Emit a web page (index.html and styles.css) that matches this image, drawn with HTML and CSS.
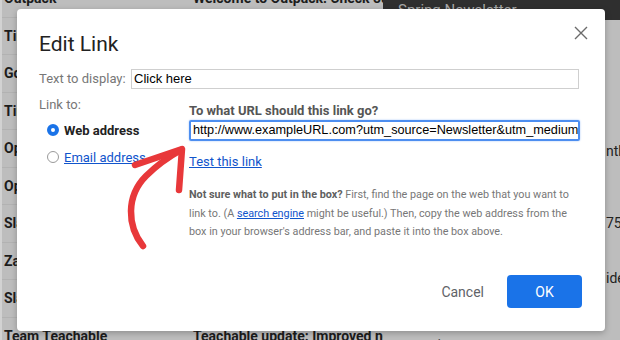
FILE: index.html
```html
<!DOCTYPE html>
<html>
<head>
<meta charset="utf-8">
<link rel="stylesheet" href="styles.css">
</head>
<body>
<div class="screen">
  <div class="inbox">
    <div class="row"><span class="from">Outpack</span><span class="subj">Welcome to Outpack! Check out</span></div>
    <div class="row"><span class="from">Tim Ferriss</span><span class="subj">5-Bullet Friday</span></div>
    <div class="row"><span class="from">Google</span><span class="subj">Security alert</span></div>
    <div class="row"><span class="from">Tiny Letter</span><span class="subj">Your weekly digest</span></div>
    <div class="row"><span class="from">OptinMonster</span><span class="subj">New feature</span></div>
    <div class="row"><span class="from">OptinMonster</span><span class="subj">Webinar reminder</span></div>
    <div class="row"><span class="from">Slack</span><span class="subj">New sign-in</span></div>
    <div class="row"><span class="from">Zapier</span><span class="subj">Your Zap ran</span></div>
    <div class="row"><span class="from">Slack</span><span class="subj">Weekly summary</span></div>
    <div class="row"><span class="from">Team Teachable</span><span class="subj">Teachable update: Improved no</span></div>
  </div>
  <div class="compose">
    <div class="compose-head">Spring Newsletter</div>
    <div class="compose-body">
      <div class="snip s1">nth's</div>
      <div class="snip s2">75</div>
      <div class="snip s3">ide</div>
      <div class="sign">Hannah</div>
    </div>
  </div>
</div>

<div class="dialog">
  <h1 class="title">Edit Link</h1>
  <svg class="close" width="14" height="14" viewBox="0 0 14 14"><path d="M1 1L13 13M13 1L1 13" stroke="#6b6b6b" stroke-width="1.4" fill="none"/></svg>

  <div class="display-row">
    <span class="label">Text to display:</span>
    <div class="field">Click here</div>
  </div>

  <div class="link-grid">
    <div class="link-left">
      <div class="label">Link to:</div>
      <div class="radio-row first"><span class="radio on"></span><span class="radio-text">Web address</span></div>
      <div class="radio-row second"><span class="radio"></span><a class="link">Email address</a></div>
    </div>
    <div class="link-right">
      <div class="question">To what URL should this link go?</div>
      <div class="url-field">http://www.exampleURL.com?utm_source=Newsletter&amp;utm_medium=email</div>
      <a class="link test">Test this link</a>
      <p class="help"><b>Not sure what to put in the box?</b> First, find the page on the web that you want to<br>link to. (A <a class="link">search engine</a> might be useful.) Then, copy the web address from the<br>box in your browser's address bar, and paste it into the box above.</p>
    </div>
  </div>

  <div class="footer">
    <button class="cancel">Cancel</button>
    <button class="ok">OK</button>
  </div>
</div>

<svg class="arrow" width="620" height="340" viewBox="0 0 620 340">
  <path d="M143 246 C127 226 126 196 146 176 C160 162 172 155 181 150" stroke="#e8383a" stroke-width="6.5" fill="none" stroke-linecap="round"/>
  <path d="M135 165 L182 149 L179 190" stroke="#e8383a" stroke-width="6.5" fill="none" stroke-linecap="round" stroke-linejoin="round"/>
</svg>
</body>
</html>
```

FILE: styles.css
```css
html, body {
  margin: 0;
  padding: 0;
}
body {
  width: 620px;
  height: 340px;
  overflow: hidden;
  background: #bdbdbd;
  font-family: Roboto, "Liberation Sans", Arial, sans-serif;
  position: relative;
}
.screen {
  display: flex;
  width: 620px;
  height: 340px;
  overflow: hidden;
  border-left: 2px solid #d2d2d2;
  box-sizing: border-box;
}
.inbox {
  width: 381px;
  margin-top: -20px;
  flex: none;
}
.row {
  height: 37.5px;
  box-sizing: border-box;
  border-bottom: 1px solid #b2b2b2;
  display: flex;
  align-items: center;
  font-size: 14px;
  font-weight: 700;
  color: #1c1c1c;
  white-space: nowrap;
  overflow: hidden;
}
.from {
  width: 189px;
  padding-left: 2px;
  flex: none;
}
.subj {
  flex: none;
}
.compose {
  flex: 1;
  display: flex;
  flex-direction: column;
}
.compose-head {
  height: 28px;
  background: #2f2f2f;
  color: #a8a8a8;
  font-size: 15px;
  line-height: 20px;
  padding-left: 15px;
  white-space: nowrap;
}
.compose-body {
  flex: 1;
  position: relative;
  font-size: 14px;
  color: #222;
  white-space: nowrap;
}
.snip {
  padding-left: 223px;
  line-height: 20px;
}
.s1 { margin-top: 121px; }
.s2 { margin-top: 52px; }
.s3 { margin-top: 35px; }
.sign {
  margin-top: 49px;
  padding-left: 17px;
  color: #444;
  font-size: 13px;
}

.dialog {
  position: absolute;
  left: 17px;
  top: 9px;
  width: 588px;
  height: 322px;
  box-sizing: border-box;
  background: #fff;
  border-radius: 4px;
  box-shadow: 0 2px 6px rgba(0,0,0,0.25);
  padding: 21px 23px 23px 22px;
  display: flex;
  flex-direction: column;
}
.title {
  margin: 0;
  font-size: 21px;
  line-height: 28px;
  font-weight: 400;
  color: #222;
}
.close {
  position: absolute;
  right: 17px;
  top: 17px;
}
.display-row {
  display: flex;
  align-items: center;
  margin-top: 11px;
  margin-right: 3px;
}
.label {
  font-size: 13px;
  color: #777;
  line-height: 20px;
}
.display-row .label {
  width: 92px;
  flex: none;
}
.field {
  flex: 1;
  height: 20px;
  box-sizing: border-box;
  border: 1px solid #cfcfcf;
  font-family: "Liberation Sans", Arial, sans-serif;
  font-size: 13px;
  line-height: 18px;
  padding: 0 2px;
  color: #000;
}
.link-grid {
  display: grid;
  grid-template-columns: 150px minmax(0, 1fr);
  margin-top: 6px;
  margin-right: 2px;
}
.radio-row {
  display: flex;
  align-items: center;
  height: 20px;
  margin-left: 8px;
  gap: 5px;
}
.radio-row.first {
  margin-top: 5px;
}
.radio-row.second {
  margin-top: 7px;
}
.radio {
  width: 12px;
  height: 12px;
  box-sizing: border-box;
  border-radius: 50%;
  border: 1px solid #9a9a9a;
  flex: none;
}
.radio.on {
  border: 4px solid #1a73e8;
  background: #fff;
}
.radio-text {
  font-size: 13px;
  font-weight: 700;
  color: #222;
}
.link {
  color: #1155cc;
  text-decoration: underline;
  font-size: 13px;
  cursor: pointer;
}
.link-right {
  padding-top: 8px;
  display: flex;
  flex-direction: column;
  align-items: flex-start;
  min-width: 0;
}
.question {
  font-size: 13px;
  font-weight: 700;
  color: #555;
  line-height: 16px;
}
.url-field {
  margin-top: 1px;
  align-self: stretch;
  height: 21px;
  box-sizing: border-box;
  border: 2px solid #4d8ef0;
  box-shadow: 0 0 2px #9fc3f8;
  border-radius: 2px;
  font-family: "Liberation Sans", Arial, sans-serif;
  font-size: 12.7px;
  line-height: 17px;
  padding: 0 2px;
  white-space: nowrap;
  overflow: hidden;
  color: #000;
}
.test {
  margin-top: 13px;
  line-height: 16px;
}
.help {
  margin: 16px 0 0;
  font-size: 10.8px;
  line-height: 18.5px;
  color: #777;
  white-space: nowrap;
}
.help b {
  color: #5f5f5f;
}
.help .link {
  font-size: 10.8px;
}
.footer {
  margin-top: auto;
  display: flex;
  justify-content: flex-end;
  align-items: center;
}
.cancel {
  border: none;
  background: none;
  font-family: Roboto, sans-serif;
  font-size: 14px;
  color: #5f6368;
  padding: 0;
  margin-right: 23px;
}
.ok {
  width: 75px;
  height: 33px;
  border: none;
  border-radius: 4px;
  background: #1a73e8;
  color: #fff;
  font-family: Roboto, sans-serif;
  font-size: 14px;
}
.arrow {
  position: absolute;
  left: 0;
  top: 0;
  pointer-events: none;
}
```
